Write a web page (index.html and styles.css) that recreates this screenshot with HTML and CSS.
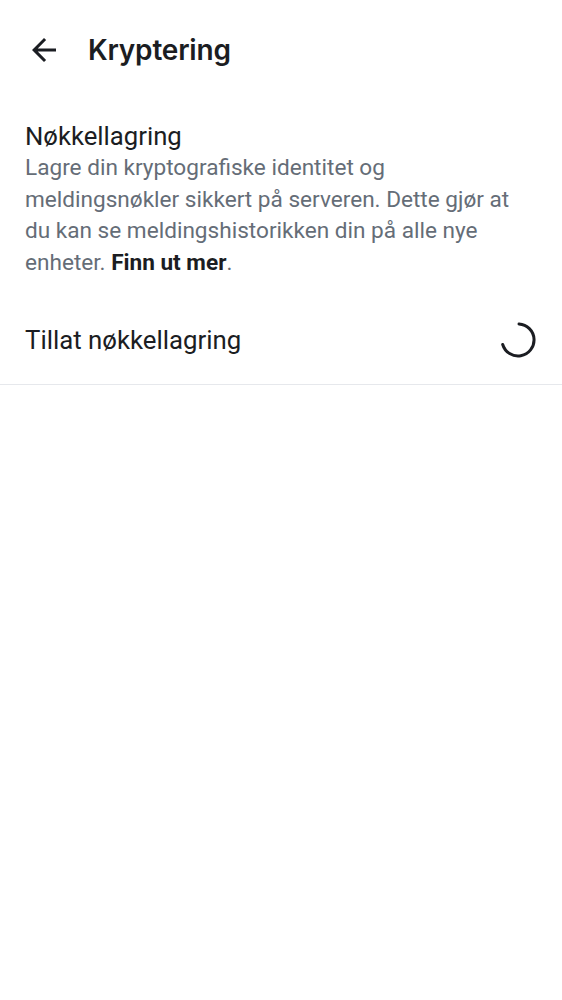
FILE: index.html
```html
<!DOCTYPE html>
<html>
<head>
<meta charset="utf-8">
<link rel="stylesheet" href="styles.css">
</head>
<body>
<header class="toolbar">
  <button class="back" aria-label="Tilbake">
    <svg width="36" height="36" viewBox="0 0 24 24"><path d="M20 11H7.83l5.59-5.59L12 4l-8 8 8 8 1.41-1.41L7.83 13H20v-2z" fill="#1b1d22"/></svg>
  </button>
  <h1 class="title">Kryptering</h1>
</header>
<section class="info">
  <div class="info-title">Nøkkellagring</div>
  <p class="info-desc">Lagre din kryptografiske identitet og meldingsnøkler sikkert på serveren. Dette gjør at du kan se meldingshistorikken din på alle nye enheter. <b class="link">Finn ut mer</b>.</p>
</section>
<div class="row">
  <span class="row-label">Tillat nøkkellagring</span>
  <svg class="spinner" width="40" height="40" viewBox="0 0 40 40"><path d="M21 4 A16 16 0 1 1 4.7 24.5" fill="none" stroke="#1b1d22" stroke-width="3" stroke-linecap="round"/></svg>
</div>
</body>
</html>
```
FILE: styles.css
```css
html, body { margin: 0; padding: 0; background: #fff; }
body { font-family: Roboto, "Noto Sans", sans-serif; color: #1b1d22; width: 562px; }
.toolbar { display: flex; align-items: center; height: 100px; padding-left: 26px; }
.back { border: 0; background: none; padding: 0; width: 36px; height: 36px; display: flex; align-items: center; justify-content: center; }
.title { margin: 0 0 0 26px; font-family: Inter, Roboto, sans-serif; font-weight: 600; font-size: 28px; letter-spacing: -0.2px; color: #1b1d22; }
.info { padding: 20px 25px 0 25px; }
.info-title { font-size: 25.7px; line-height: 32px; color: #1b1d22; }
.info-desc { margin: 0; font-size: 22.6px; line-height: 31.7px; color: #656d77; }
.link { color: #1b1d22; font-weight: 700; }
.row { display: flex; align-items: center; justify-content: space-between; height: 88px; padding: 0 24px 0 25px; border-bottom: 1px solid #e6e8ec; margin-top: 17px; }
.row-label { font-size: 25.8px; color: #1b1d22; }
.spinner { display: block; }
```
